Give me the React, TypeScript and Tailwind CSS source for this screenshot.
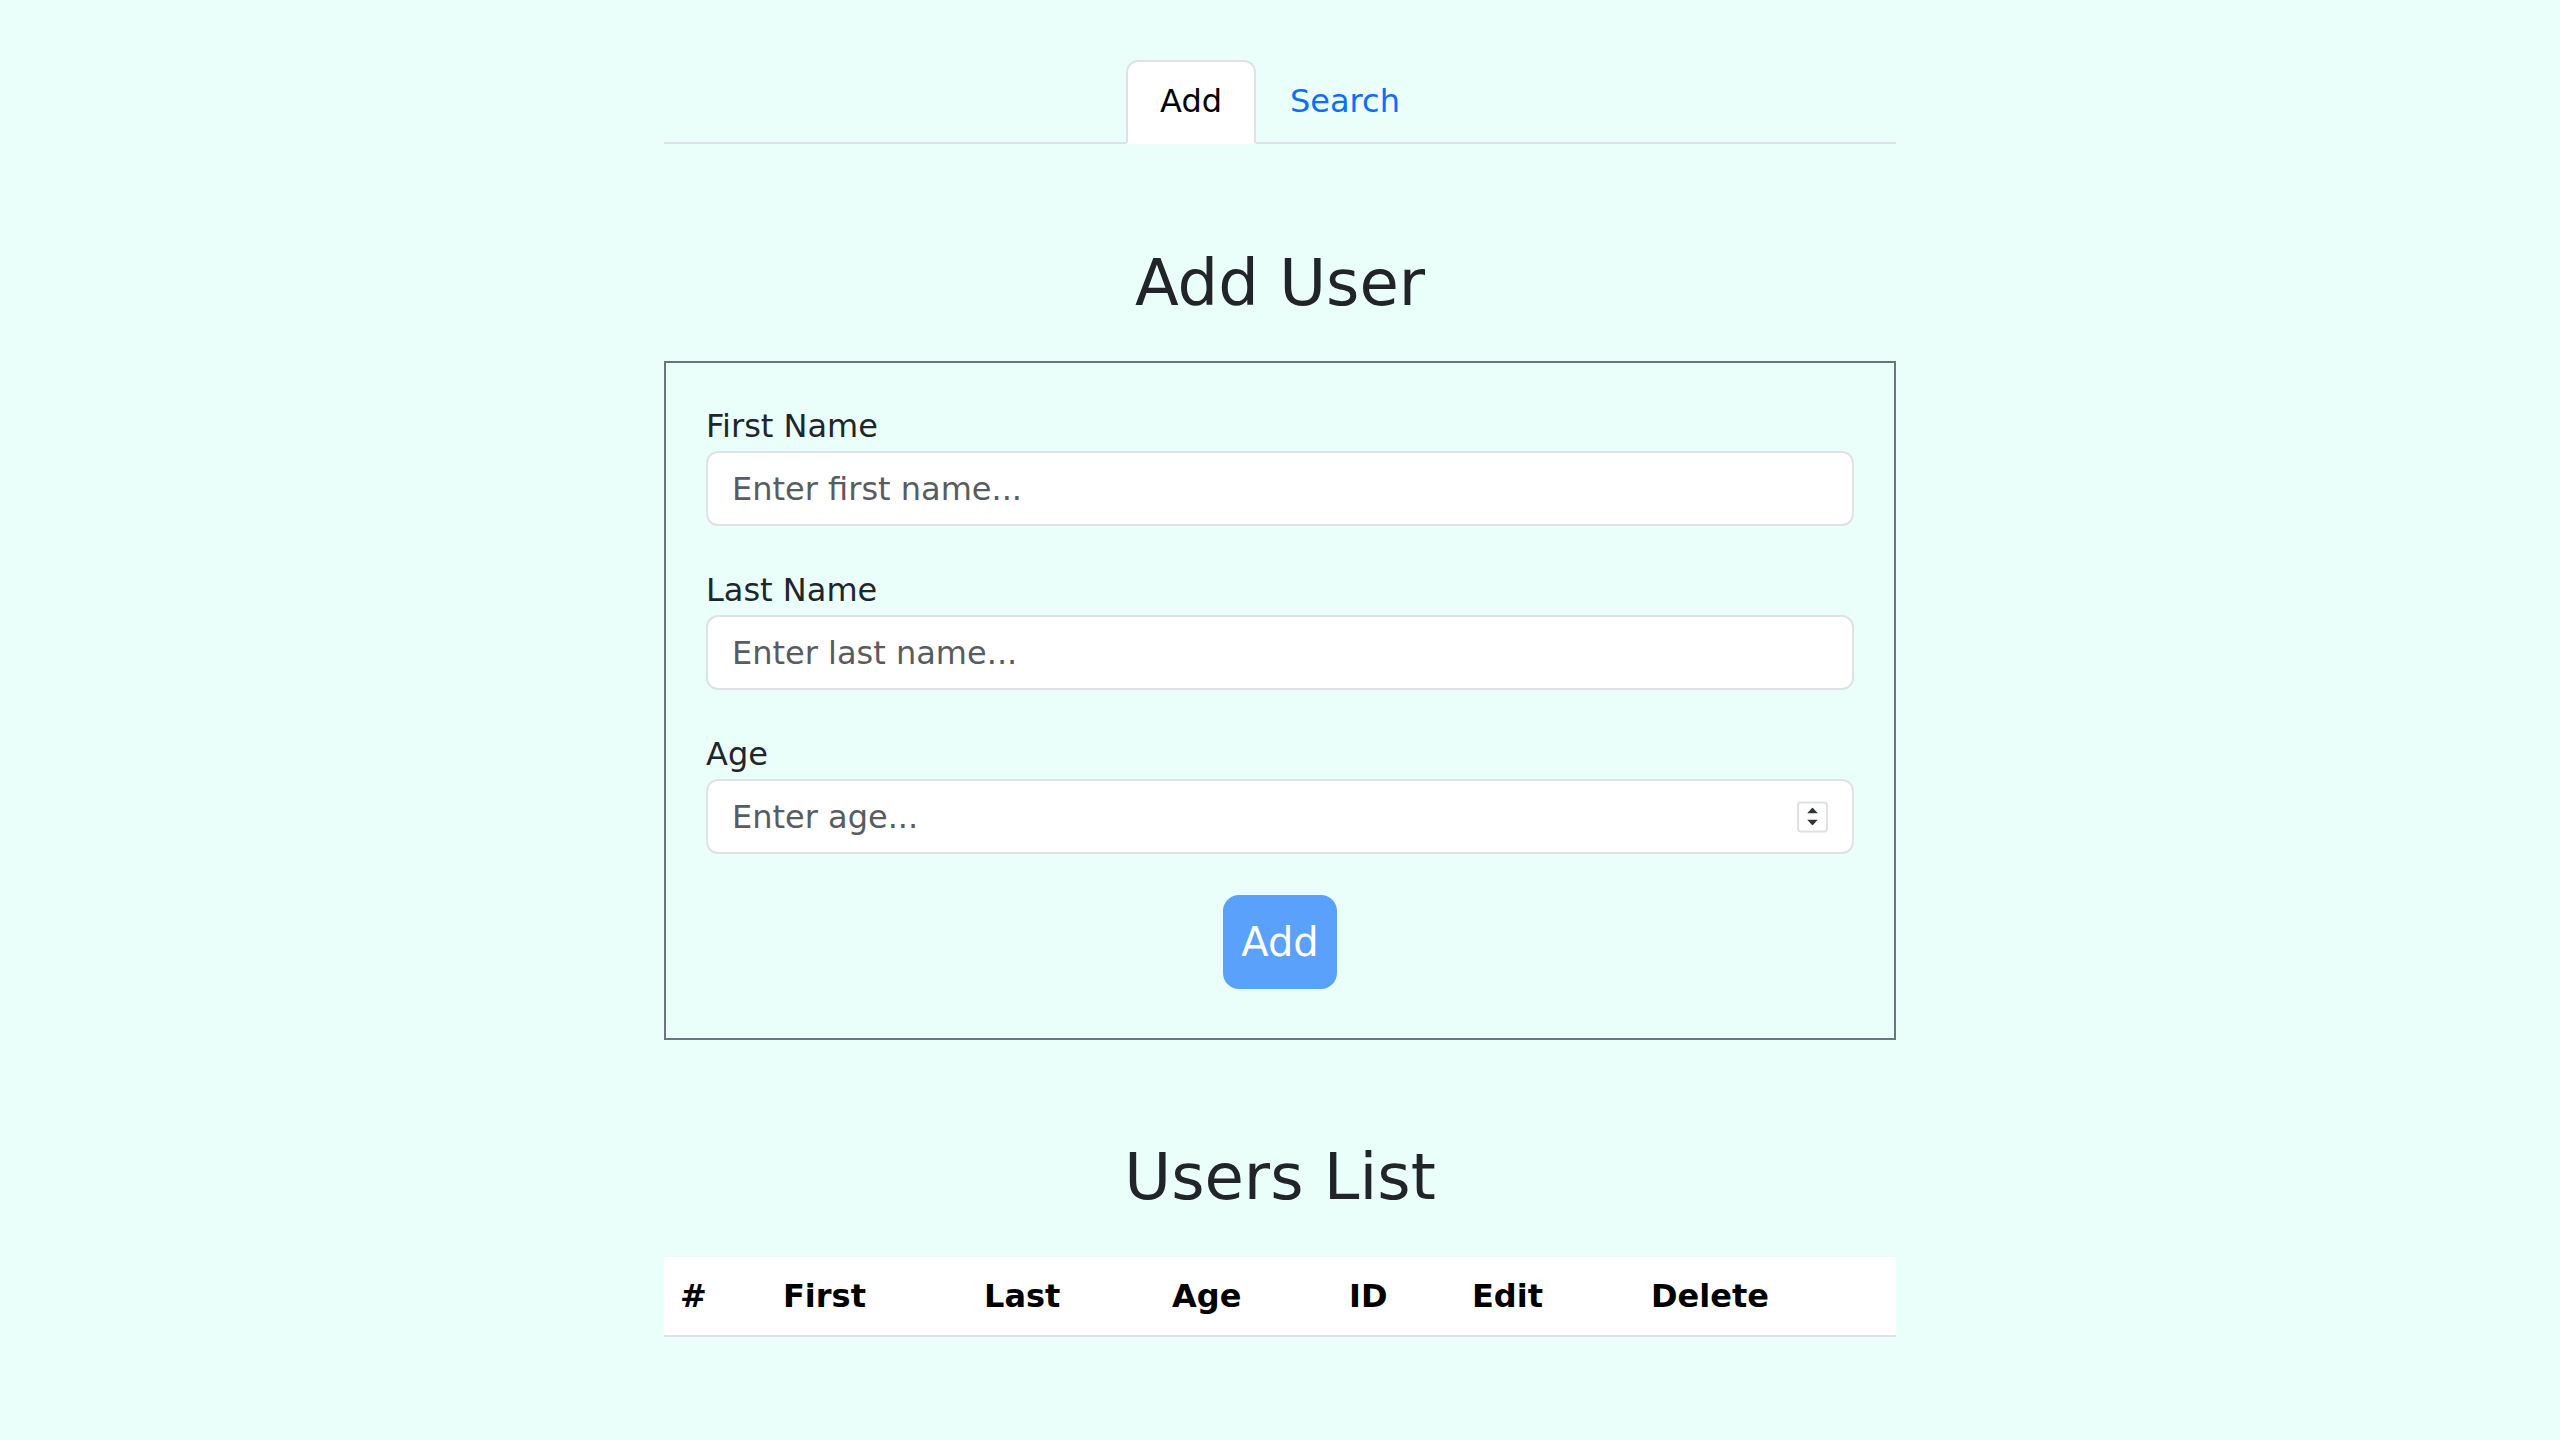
import React from "react";

const columns = [
  { label: "#", width: "w-[103px]" },
  { label: "First", width: "w-[201px]" },
  { label: "Last", width: "w-[188px]" },
  { label: "Age", width: "w-[177px]" },
  { label: "ID", width: "w-[123px]" },
  { label: "Edit", width: "w-[179px]" },
  { label: "Delete", width: "w-[261px]" },
];

const Field = ({ label, placeholder, number }: any) => {
  return (
    <div className="mb-[41px]">
      <label className="block text-[32px] leading-[46px] mb-[2px] text-[#212529]">{label}</label>
      <div className="relative">
        <input
          type="text"
          placeholder={placeholder}
          className="w-full h-[75px] bg-white border-2 border-[#dee2e6] rounded-[12px] px-[24px] text-[32px] text-[#212529] placeholder:text-[#595c5f] outline-none"
        />
        {number && (
          <div className="absolute right-[26px] top-1/2 -translate-y-1/2 w-[31px] h-[31px] border-2 border-[#dee2e6] rounded-[4px] bg-white flex flex-col items-center justify-center gap-[6px]">
            <svg width="11" height="6" viewBox="0 0 11 6">
              <path d="M0 6 L5.5 0 L11 6 Z" fill="#333" />
            </svg>
            <svg width="11" height="6" viewBox="0 0 11 6">
              <path d="M0 0 L11 0 L5.5 6 Z" fill="#333" />
            </svg>
          </div>
        )}
      </div>
    </div>
  );
};

export default function App() {
  return (
    <div className="min-h-screen bg-[#eafff9] font-['DejaVu_Sans',sans-serif] text-[#212529]">
      <div className="w-[1232px] mx-auto pt-[60px]">
        <ul className="flex justify-center border-b-2 border-[#dee2e6]">
          <li className="-mb-[2px]">
            <button className="px-[32px] pt-[15px] pb-[17px] text-[32px] leading-[48px] text-black bg-white border-2 border-[#dee2e6] border-b-white rounded-t-[12px]">
              Add
            </button>
          </li>
          <li className="-mb-[2px]">
            <button className="px-[32px] pt-[15px] pb-[17px] text-[32px] leading-[48px] text-[#0d6efd] border-2 border-transparent rounded-t-[12px]">
              Search
            </button>
          </li>
        </ul>

        <h2 className="mt-[101px] text-center text-[64px] leading-[77px] font-normal">Add User</h2>

        <form className="mt-[39px] border-2 border-[#6c757d] px-[40px] pt-[40px] pb-[49px]">
          <Field label="First Name" placeholder="Enter first name..." />
          <Field label="Last Name" placeholder="Enter last name..." />
          <Field label="Age" placeholder="Enter age..." number />
          <div className="flex justify-center">
            <button
              type="button"
              disabled
              className="px-[16px] py-[15px] text-[40px] leading-[60px] text-white bg-[#5aa1fb] border-2 border-[#5aa1fb] rounded-[16px]"
            >
              Add
            </button>
          </div>
        </form>

        <h2 className="mt-[99px] text-center text-[64px] leading-[77px] font-normal">Users List</h2>

        <table className="mt-[41px] w-full border-collapse table-fixed">
          <thead>
            <tr className="bg-white border-b-2 border-[#dee2e6]">
              {columns.map((c) => (
                <th
                  key={c.label}
                  className={`${c.width} px-[16px] py-[15px] text-left text-[32px] leading-[48px] font-bold text-black`}
                >
                  {c.label}
                </th>
              ))}
            </tr>
          </thead>
          <tbody></tbody>
        </table>
      </div>
    </div>
  );
}
